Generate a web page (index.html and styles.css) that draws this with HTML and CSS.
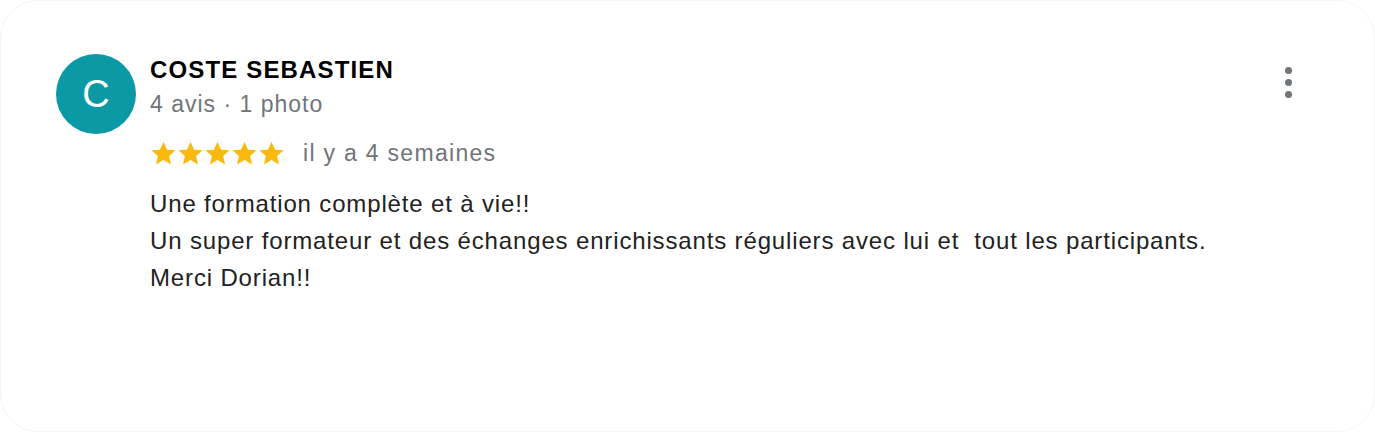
FILE: index.html
```html
<!DOCTYPE html>
<html lang="fr">
<head>
<meta charset="utf-8">
<title>Avis</title>
<link rel="stylesheet" href="styles.css">
</head>
<body>
<div class="card">
  <div class="review">
    <div class="avatar">C</div>
    <div class="content">
      <div class="name">COSTE SEBASTIEN</div>
      <div class="meta">4 avis · 1 photo</div>
      <div class="rating">
        <div class="stars">
          <svg viewBox="0 0 24 24" class="star"><path d="M12 1.6l3.2 7 7.5.6-5.7 5.1 1.7 7.5L12 17.8l-6.7 4 1.7-7.5-5.7-5.1 7.5-.6z"/></svg>
          <svg viewBox="0 0 24 24" class="star"><path d="M12 1.6l3.2 7 7.5.6-5.7 5.1 1.7 7.5L12 17.8l-6.7 4 1.7-7.5-5.7-5.1 7.5-.6z"/></svg>
          <svg viewBox="0 0 24 24" class="star"><path d="M12 1.6l3.2 7 7.5.6-5.7 5.1 1.7 7.5L12 17.8l-6.7 4 1.7-7.5-5.7-5.1 7.5-.6z"/></svg>
          <svg viewBox="0 0 24 24" class="star"><path d="M12 1.6l3.2 7 7.5.6-5.7 5.1 1.7 7.5L12 17.8l-6.7 4 1.7-7.5-5.7-5.1 7.5-.6z"/></svg>
          <svg viewBox="0 0 24 24" class="star"><path d="M12 1.6l3.2 7 7.5.6-5.7 5.1 1.7 7.5L12 17.8l-6.7 4 1.7-7.5-5.7-5.1 7.5-.6z"/></svg>
        </div>
        <span class="date">il y a 4 semaines</span>
      </div>
      <p class="text">Une formation complète et à vie!!<br>Un super formateur et des échanges enrichissants réguliers avec lui et&nbsp; tout les participants.<br>Merci Dorian!!</p>
    </div>
    <div class="more" aria-label="Plus d'options">
      <span class="dot"></span><span class="dot"></span><span class="dot"></span>
    </div>
  </div>
</div>
</body>
</html>
```

FILE: styles.css
```css
html, body {
  margin: 0;
  padding: 0;
  background: #ffffff;
}
body {
  font-family: "Liberation Sans", Arial, sans-serif;
}
.card {
  box-sizing: border-box;
  width: 1375px;
  height: 432px;
  border: 1px solid #f4f4f4;
  border-radius: 38px;
  background: #ffffff;
  padding: 53px 82px 0 55px;
}
.review {
  display: flex;
  align-items: flex-start;
}
.avatar {
  flex: none;
  width: 80px;
  height: 80px;
  border-radius: 50%;
  background: #0b99a6;
  color: #ffffff;
  font-size: 38px;
  line-height: 80px;
  text-align: center;
  margin-right: 14px;
}
.content {
  flex: 1;
}
.name {
  font-weight: 700;
  font-size: 24px;
  line-height: 32px;
  color: #000000;
  letter-spacing: 1.15px;
}
.meta {
  margin-top: 2px;
  font-size: 23px;
  line-height: 32px;
  color: #70757a;
  letter-spacing: 1px;
}
.rating {
  display: flex;
  align-items: center;
  margin-top: 17px;
  height: 32px;
}
.stars {
  display: flex;
  margin-right: 18px;
}
.star {
  width: 27px;
  height: 27px;
  fill: #f9b90f;
}
.date {
  font-size: 23px;
  color: #70757a;
  letter-spacing: 1.3px;
}
.text {
  margin: 16px 0 0;
  font-size: 24px;
  line-height: 37px;
  color: #222222;
  letter-spacing: 0.85px;
}
.more {
  flex: none;
  display: flex;
  flex-direction: column;
  gap: 5px;
  margin-top: 13px;
}
.dot {
  width: 7px;
  height: 7px;
  border-radius: 50%;
  background: #70757a;
}
```
